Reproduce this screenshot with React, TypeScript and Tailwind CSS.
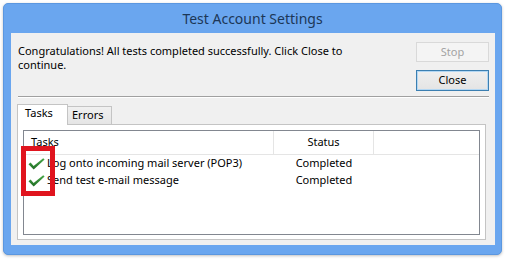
import React from "react";

function Check() {
  return (
    <svg width="17" height="12" viewBox="0 0 17 12" className="shrink-0">
      <defs>
        <linearGradient id="cg" x1="0" y1="0" x2="0" y2="1">
          <stop offset="0" stopColor="#4aa84a" />
          <stop offset="1" stopColor="#1d6b22" />
        </linearGradient>
      </defs>
      <path d="M0.5 6.2 L2.6 4.6 L5.6 8 L15.2 0.3 L16.6 1.6 L5.7 11.6 Z" fill="url(#cg)" />
    </svg>
  );
}

export default function App() {
  const font = { fontFamily: '"Noto Sans", "Open Sans", sans-serif' };
  return (
    <div className="w-[505px] h-[259px] bg-white pt-[3px] pl-[3px]" style={font}>
      <div className="w-[499px] h-[252px] rounded-[5px] bg-[#6aa6ef] border border-[#5b97e0] flex flex-col shadow-[0_1px_3px_rgba(0,0,0,0.25)]">
        <div className="h-[29px] flex items-center justify-center text-[14px] text-[#1c3757] leading-none">
          Test Account Settings
        </div>
        <div className="ml-[7px] mr-[6px] h-[212px] bg-[#f0f0f0] flex flex-col text-[11px] text-black relative">
          <div className="flex pt-[9px] pl-[7px] pr-[6px]">
            <div className="flex-1 pt-[2px] leading-[14px]">
              Congratulations! All tests completed successfully. Click Close to
              <br />
              continue.
            </div>
            <div className="w-[73px] flex flex-col gap-[8px]">
              <div className="h-[20px] border border-[#d9d9d9] bg-[#f4f4f4] text-[#a3a3a3] flex items-center justify-center">
                Stop
              </div>
              <div className="h-[21px] border border-[#3c7fb1] bg-gradient-to-b from-[#efefef] to-[#e4e4e4] flex items-center justify-center shadow-[inset_0_0_0_1px_#b3d7f3]">
                Close
              </div>
            </div>
          </div>
          <div className="mt-[5px] ml-[7px] mr-[6px] h-px bg-[#a0a0a0] border-b border-white box-content"></div>
          <div className="mt-[5px] ml-[6px] mr-[9px] flex flex-col">
            <div className="flex items-end h-[21px]">
              <div className="w-[51px] h-[21px] bg-white border border-b-0 border-[#c4c4c4] pl-[7px] relative z-10 -mb-px">
                Tasks
              </div>
              <div className="w-[44px] h-[18px] bg-gradient-to-b from-[#f0f0f0] to-[#e5e5e5] border border-l-0 border-b-0 border-[#c4c4c4] pl-[4px]">
                Errors
              </div>
            </div>
            <div className="h-[116px] bg-white border border-[#c4c4c4] p-[5px]">
              <div className="h-[105px] border border-[#828790] bg-white flex flex-col">
                <div className="flex h-[24px] border-b border-[#e5e5e5] items-center">
                  <div className="w-[250px] h-full border-r border-[#e5e5e5] pl-[7px] flex items-center">Tasks</div>
                  <div className="w-[100px] h-full border-r border-[#e5e5e5] flex items-center justify-center">Status</div>
                </div>
                <div className="flex flex-col">
                  {["Log onto incoming mail server (POP3)", "Send test e-mail message"].map((t) => (
                    <div key={t} className="flex h-[17px] items-center">
                      <div className="w-[250px] flex items-center pl-[4px] gap-[2px]">
                        <Check />
                        <span>{t}</span>
                      </div>
                      <div className="w-[100px] text-center">Completed</div>
                    </div>
                  ))}
                </div>
              </div>
            </div>
          </div>
          <div className="absolute left-[10px] top-[113px] w-[34px] h-[50px] border-[5px] border-[#e0141e]"></div>
        </div>
      </div>
    </div>
  );
}
